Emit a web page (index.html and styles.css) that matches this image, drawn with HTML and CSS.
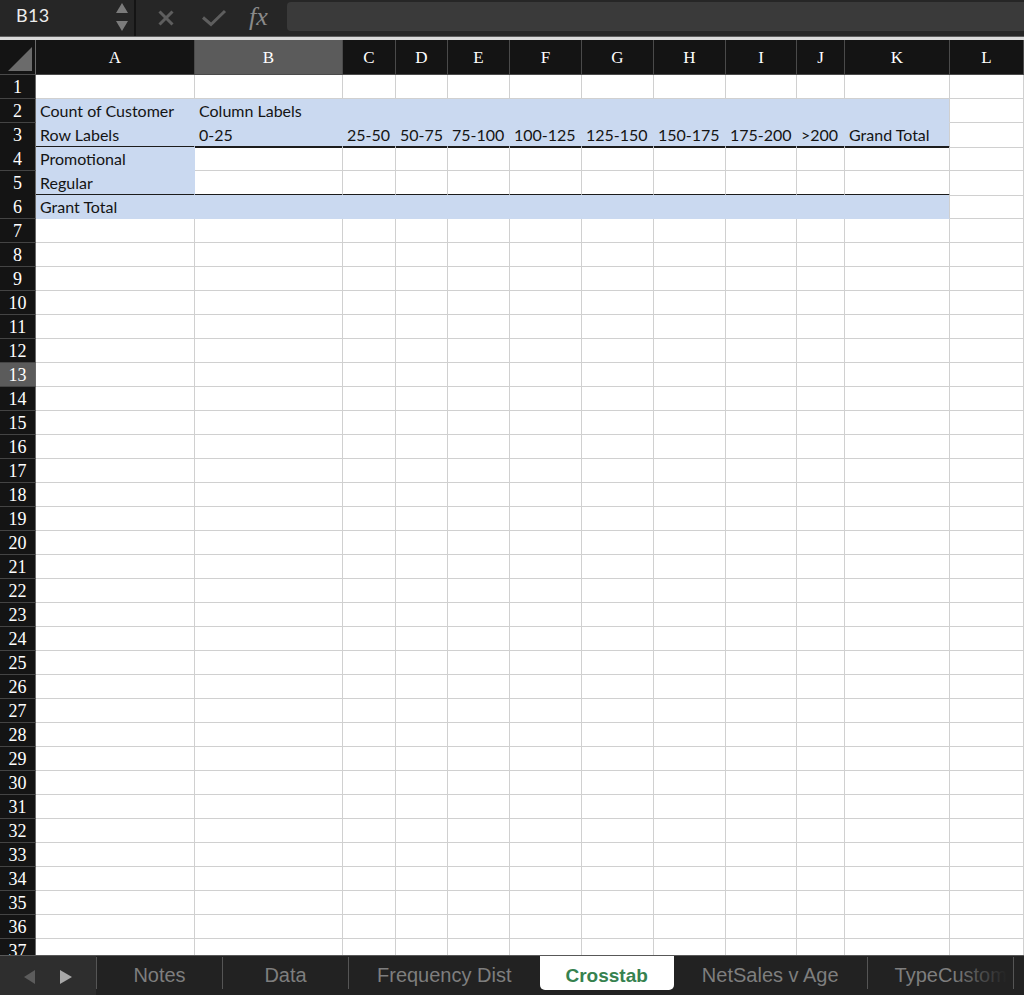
FILE: index.html
```html
<!DOCTYPE html>
<html>
<head>
<meta charset="utf-8">
<link rel="stylesheet" href="styles.css">
</head>
<body>
<div class="app">
  <div class="topbar">
    <div class="namebox">
      <span class="name">B13</span>
      <svg class="stepper" width="12" height="28" viewBox="0 0 12 28"><polygon points="0,10 6,0 12,10" /><polygon points="0,18 12,18 6,28" /></svg>
    </div>
    <div class="actions">
      <svg class="cancel" width="16" height="16" viewBox="0 0 16 16"><line x1="1.5" y1="1.5" x2="14.5" y2="14.5"/><line x1="14.5" y1="1.5" x2="1.5" y2="14.5"/></svg>
      <svg class="confirm" width="26" height="18" viewBox="0 0 26 18"><polyline points="2,8.5 10,15.5 24,2"/></svg>
      <span class="fx">fx</span>
    </div>
    <div class="formula"></div>
  </div>
  <div class="split"></div>
  <div class="sheet">
    <div class="row hdr">
      <div class="corner"><svg width="35" height="34" viewBox="0 0 35 34"><polygon points="8,31 32,31 32,7"/></svg></div>
      <div class="ch">A</div><div class="ch sel">B</div><div class="ch">C</div><div class="ch">D</div><div class="ch">E</div><div class="ch">F</div><div class="ch">G</div><div class="ch">H</div><div class="ch">I</div><div class="ch">J</div><div class="ch">K</div><div class="ch">L</div>
    </div>
    <div class="row"><div class="rh">1</div><div class="c"></div><div class="c"></div><div class="c"></div><div class="c"></div><div class="c"></div><div class="c"></div><div class="c"></div><div class="c"></div><div class="c"></div><div class="c"></div><div class="c"></div><div class="c"></div></div>
    <div class="row"><div class="rh">2</div><div class="c p">Count of Customer</div><div class="c p">Column Labels</div><div class="c p"></div><div class="c p"></div><div class="c p"></div><div class="c p"></div><div class="c p"></div><div class="c p"></div><div class="c p"></div><div class="c p"></div><div class="c p pe"></div><div class="c"></div></div>
    <div class="row"><div class="rh">3</div><div class="c p bb">Row Labels</div><div class="c p bb">0-25</div><div class="c p bb">25-50</div><div class="c p bb">50-75</div><div class="c p bb">75-100</div><div class="c p bb">100-125</div><div class="c p bb">125-150</div><div class="c p bb">150-175</div><div class="c p bb">175-200</div><div class="c p bb">&gt;200</div><div class="c p pe bb">Grand Total</div><div class="c"></div></div>
    <div class="row"><div class="rh">4</div><div class="c p">Promotional</div><div class="c"></div><div class="c"></div><div class="c"></div><div class="c"></div><div class="c"></div><div class="c"></div><div class="c"></div><div class="c"></div><div class="c"></div><div class="c"></div><div class="c"></div></div>
    <div class="row"><div class="rh">5</div><div class="c p bb">Regular</div><div class="c bb"></div><div class="c bb"></div><div class="c bb"></div><div class="c bb"></div><div class="c bb"></div><div class="c bb"></div><div class="c bb"></div><div class="c bb"></div><div class="c bb"></div><div class="c bb"></div><div class="c"></div></div>
    <div class="row"><div class="rh">6</div><div class="c p">Grant Total</div><div class="c p"></div><div class="c p"></div><div class="c p"></div><div class="c p"></div><div class="c p"></div><div class="c p"></div><div class="c p"></div><div class="c p"></div><div class="c p"></div><div class="c p pe"></div><div class="c"></div></div>
    <div class="row"><div class="rh">7</div><div class="c"></div><div class="c"></div><div class="c"></div><div class="c"></div><div class="c"></div><div class="c"></div><div class="c"></div><div class="c"></div><div class="c"></div><div class="c"></div><div class="c"></div><div class="c"></div></div>
    <div class="row"><div class="rh">8</div><div class="c"></div><div class="c"></div><div class="c"></div><div class="c"></div><div class="c"></div><div class="c"></div><div class="c"></div><div class="c"></div><div class="c"></div><div class="c"></div><div class="c"></div><div class="c"></div></div>
    <div class="row"><div class="rh">9</div><div class="c"></div><div class="c"></div><div class="c"></div><div class="c"></div><div class="c"></div><div class="c"></div><div class="c"></div><div class="c"></div><div class="c"></div><div class="c"></div><div class="c"></div><div class="c"></div></div>
    <div class="row"><div class="rh">10</div><div class="c"></div><div class="c"></div><div class="c"></div><div class="c"></div><div class="c"></div><div class="c"></div><div class="c"></div><div class="c"></div><div class="c"></div><div class="c"></div><div class="c"></div><div class="c"></div></div>
    <div class="row"><div class="rh">11</div><div class="c"></div><div class="c"></div><div class="c"></div><div class="c"></div><div class="c"></div><div class="c"></div><div class="c"></div><div class="c"></div><div class="c"></div><div class="c"></div><div class="c"></div><div class="c"></div></div>
    <div class="row"><div class="rh">12</div><div class="c"></div><div class="c"></div><div class="c"></div><div class="c"></div><div class="c"></div><div class="c"></div><div class="c"></div><div class="c"></div><div class="c"></div><div class="c"></div><div class="c"></div><div class="c"></div></div>
    <div class="row"><div class="rh sel">13</div><div class="c"></div><div class="c"></div><div class="c"></div><div class="c"></div><div class="c"></div><div class="c"></div><div class="c"></div><div class="c"></div><div class="c"></div><div class="c"></div><div class="c"></div><div class="c"></div></div>
    <div class="row"><div class="rh">14</div><div class="c"></div><div class="c"></div><div class="c"></div><div class="c"></div><div class="c"></div><div class="c"></div><div class="c"></div><div class="c"></div><div class="c"></div><div class="c"></div><div class="c"></div><div class="c"></div></div>
    <div class="row"><div class="rh">15</div><div class="c"></div><div class="c"></div><div class="c"></div><div class="c"></div><div class="c"></div><div class="c"></div><div class="c"></div><div class="c"></div><div class="c"></div><div class="c"></div><div class="c"></div><div class="c"></div></div>
    <div class="row"><div class="rh">16</div><div class="c"></div><div class="c"></div><div class="c"></div><div class="c"></div><div class="c"></div><div class="c"></div><div class="c"></div><div class="c"></div><div class="c"></div><div class="c"></div><div class="c"></div><div class="c"></div></div>
    <div class="row"><div class="rh">17</div><div class="c"></div><div class="c"></div><div class="c"></div><div class="c"></div><div class="c"></div><div class="c"></div><div class="c"></div><div class="c"></div><div class="c"></div><div class="c"></div><div class="c"></div><div class="c"></div></div>
    <div class="row"><div class="rh">18</div><div class="c"></div><div class="c"></div><div class="c"></div><div class="c"></div><div class="c"></div><div class="c"></div><div class="c"></div><div class="c"></div><div class="c"></div><div class="c"></div><div class="c"></div><div class="c"></div></div>
    <div class="row"><div class="rh">19</div><div class="c"></div><div class="c"></div><div class="c"></div><div class="c"></div><div class="c"></div><div class="c"></div><div class="c"></div><div class="c"></div><div class="c"></div><div class="c"></div><div class="c"></div><div class="c"></div></div>
    <div class="row"><div class="rh">20</div><div class="c"></div><div class="c"></div><div class="c"></div><div class="c"></div><div class="c"></div><div class="c"></div><div class="c"></div><div class="c"></div><div class="c"></div><div class="c"></div><div class="c"></div><div class="c"></div></div>
    <div class="row"><div class="rh">21</div><div class="c"></div><div class="c"></div><div class="c"></div><div class="c"></div><div class="c"></div><div class="c"></div><div class="c"></div><div class="c"></div><div class="c"></div><div class="c"></div><div class="c"></div><div class="c"></div></div>
    <div class="row"><div class="rh">22</div><div class="c"></div><div class="c"></div><div class="c"></div><div class="c"></div><div class="c"></div><div class="c"></div><div class="c"></div><div class="c"></div><div class="c"></div><div class="c"></div><div class="c"></div><div class="c"></div></div>
    <div class="row"><div class="rh">23</div><div class="c"></div><div class="c"></div><div class="c"></div><div class="c"></div><div class="c"></div><div class="c"></div><div class="c"></div><div class="c"></div><div class="c"></div><div class="c"></div><div class="c"></div><div class="c"></div></div>
    <div class="row"><div class="rh">24</div><div class="c"></div><div class="c"></div><div class="c"></div><div class="c"></div><div class="c"></div><div class="c"></div><div class="c"></div><div class="c"></div><div class="c"></div><div class="c"></div><div class="c"></div><div class="c"></div></div>
    <div class="row"><div class="rh">25</div><div class="c"></div><div class="c"></div><div class="c"></div><div class="c"></div><div class="c"></div><div class="c"></div><div class="c"></div><div class="c"></div><div class="c"></div><div class="c"></div><div class="c"></div><div class="c"></div></div>
    <div class="row"><div class="rh">26</div><div class="c"></div><div class="c"></div><div class="c"></div><div class="c"></div><div class="c"></div><div class="c"></div><div class="c"></div><div class="c"></div><div class="c"></div><div class="c"></div><div class="c"></div><div class="c"></div></div>
    <div class="row"><div class="rh">27</div><div class="c"></div><div class="c"></div><div class="c"></div><div class="c"></div><div class="c"></div><div class="c"></div><div class="c"></div><div class="c"></div><div class="c"></div><div class="c"></div><div class="c"></div><div class="c"></div></div>
    <div class="row"><div class="rh">28</div><div class="c"></div><div class="c"></div><div class="c"></div><div class="c"></div><div class="c"></div><div class="c"></div><div class="c"></div><div class="c"></div><div class="c"></div><div class="c"></div><div class="c"></div><div class="c"></div></div>
    <div class="row"><div class="rh">29</div><div class="c"></div><div class="c"></div><div class="c"></div><div class="c"></div><div class="c"></div><div class="c"></div><div class="c"></div><div class="c"></div><div class="c"></div><div class="c"></div><div class="c"></div><div class="c"></div></div>
    <div class="row"><div class="rh">30</div><div class="c"></div><div class="c"></div><div class="c"></div><div class="c"></div><div class="c"></div><div class="c"></div><div class="c"></div><div class="c"></div><div class="c"></div><div class="c"></div><div class="c"></div><div class="c"></div></div>
    <div class="row"><div class="rh">31</div><div class="c"></div><div class="c"></div><div class="c"></div><div class="c"></div><div class="c"></div><div class="c"></div><div class="c"></div><div class="c"></div><div class="c"></div><div class="c"></div><div class="c"></div><div class="c"></div></div>
    <div class="row"><div class="rh">32</div><div class="c"></div><div class="c"></div><div class="c"></div><div class="c"></div><div class="c"></div><div class="c"></div><div class="c"></div><div class="c"></div><div class="c"></div><div class="c"></div><div class="c"></div><div class="c"></div></div>
    <div class="row"><div class="rh">33</div><div class="c"></div><div class="c"></div><div class="c"></div><div class="c"></div><div class="c"></div><div class="c"></div><div class="c"></div><div class="c"></div><div class="c"></div><div class="c"></div><div class="c"></div><div class="c"></div></div>
    <div class="row"><div class="rh">34</div><div class="c"></div><div class="c"></div><div class="c"></div><div class="c"></div><div class="c"></div><div class="c"></div><div class="c"></div><div class="c"></div><div class="c"></div><div class="c"></div><div class="c"></div><div class="c"></div></div>
    <div class="row"><div class="rh">35</div><div class="c"></div><div class="c"></div><div class="c"></div><div class="c"></div><div class="c"></div><div class="c"></div><div class="c"></div><div class="c"></div><div class="c"></div><div class="c"></div><div class="c"></div><div class="c"></div></div>
    <div class="row"><div class="rh">36</div><div class="c"></div><div class="c"></div><div class="c"></div><div class="c"></div><div class="c"></div><div class="c"></div><div class="c"></div><div class="c"></div><div class="c"></div><div class="c"></div><div class="c"></div><div class="c"></div></div>
    <div class="row"><div class="rh">37</div><div class="c"></div><div class="c"></div><div class="c"></div><div class="c"></div><div class="c"></div><div class="c"></div><div class="c"></div><div class="c"></div><div class="c"></div><div class="c"></div><div class="c"></div><div class="c"></div></div>
  </div>
  <div class="tabbar">
    <div class="nav">
      <svg width="12" height="14" viewBox="0 0 12 14"><polygon class="prev" points="11,0 11,14 0,7"/></svg>
      <svg width="12" height="14" viewBox="0 0 12 14"><polygon class="next" points="0,0 0,14 12,7"/></svg>
    </div>
    <div class="tab">Notes</div>
    <div class="tab">Data</div>
    <div class="tab">Frequency Dist</div>
    <div class="tab active">Crosstab</div>
    <div class="tab noline">NetSales v Age</div>
    <div class="tab last">TypeCustomer<span class="fade"></span></div>
  </div>
</div>
</body>
</html>
```
FILE: styles.css
```css
* { box-sizing: border-box; }
html, body { margin: 0; padding: 0; }
body {
  width: 1024px;
  height: 995px;
  overflow: hidden;
  background: #ffffff;
  font-family: Lato, "Liberation Sans", sans-serif;
}
.app { display: flex; flex-direction: column; height: 995px; }

/* top formula bar */
.topbar { height: 36px; background: #262626; display: flex; flex: none; }
.namebox {
  width: 136px;
  border-right: 2px solid #141414;
  display: flex;
  align-items: center;
  justify-content: space-between;
  padding: 0 6px 0 16px;
}
.name { color: #ececec; font-size: 18px; line-height: 22px; padding-bottom: 7px; letter-spacing: 0.3px; }
.stepper { fill: #7b7b7b; margin-top: -3px; }
.actions { width: 151px; display: flex; align-items: center; }
.cancel { margin-left: 22px; stroke: #5e5e5e; stroke-width: 3; flex: none; }
.confirm { margin-left: 27px; margin-top: -1px; stroke: #5e5e5e; stroke-width: 3; fill: none; flex: none; }
.fx {
  margin-left: 22px;
  font-family: "Liberation Serif", serif;
  font-style: italic;
  font-size: 26px;
  line-height: 30px;
  color: #8a8a8a;
  padding-bottom: 3px;
}
.formula { flex: 1; margin: 2px 0 5px 0; background: #3a3a3a; border-radius: 4px 0 0 4px; }
.split { height: 4px; flex: none; border-top: 1px solid #5e5e5e; background: #dadada; }

/* sheet grid */
.sheet { flex: 1; overflow: hidden; background: #fff; }
.row {
  display: grid;
  grid-template-columns: 36px 159px 148px 53px 52px 62px 72px 72px 72px 71px 48px 105px 1fr;
  height: 24px;
}
.row.hdr { height: 35px; }
.corner { background: #141414; border-right: 1px solid #6a6a6a; border-bottom: 1px solid #4a4a4a; }
.corner svg { display: block; fill: #6b6b6b; }
.ch {
  background: #141414;
  color: #ffffff;
  font-family: "Liberation Serif", serif;
  font-size: 17px;
  line-height: 32px;
  padding-top: 2px;
  text-align: center;
  border-right: 1px solid #4a4a4a;
  border-bottom: 1px solid #4a4a4a;
}
.ch.sel { background: #5b5b5b; }
.rh {
  background: #141414;
  color: #ffffff;
  font-family: "Liberation Serif", serif;
  font-size: 18px;
  line-height: 22px;
  padding-top: 1px;
  text-align: center;
  border-right: 1px solid #6a6a6a;
  border-bottom: 1px solid #444444;
}
.rh.sel { background: #5b5b5b; }
.c {
  border-right: 1px solid #d0d0d0;
  border-bottom: 1px solid #d0d0d0;
  padding-left: 4px;
  font-size: 16px;
  line-height: 23px;
  color: #141414;
  white-space: nowrap;
}
.c.p { background: #cad9f0; border-right-color: #cad9f0; border-bottom-color: #cad9f0; }
.c.p.pe { border-right-color: #d0d0d0; }
.c.bb, .c.p.bb { border-bottom: 2px solid #1c1c1c; }

/* sheet tabs */
.tabbar {
  height: 40px;
  flex: none;
  background: #222222;
  border-top: 1px solid #585858;
  display: flex;
  align-items: flex-start;
  overflow: hidden;
}
.nav {
  width: 96px;
  height: 39px;
  background: #2e2e2e;
  display: flex;
  align-items: center;
  gap: 24px;
  padding: 2px 0 0 24px;
  flex: none;
}
.nav .prev { fill: #5c5c5c; }
.nav .next { fill: #a8a8a8; }
.tab {
  height: 32px;
  margin-top: 1px;
  min-width: 126px;
  padding: 5px 28px 0 28px;
  border-left: 1px solid #555555;
  font-family: "Liberation Sans", Arial, sans-serif;
  font-size: 20px;
  line-height: 27px;
  color: #7e7e7e;
  text-align: center;
  white-space: nowrap;
  flex: none;
}
.tab.active {
  height: 34px;
  margin-top: 0;
  min-width: 0;
  padding: 6px 26px 0 26px;
  border-left: none;
  background: #ffffff;
  border-radius: 0 0 5px 5px;
  color: #36824f;
  font-weight: bold;
  font-size: 19px;
}
.tab.noline { border-left: none; }
.tab.last {
  width: 147px;
  min-width: 0;
  padding-left: 27px;
  padding-right: 0;
  text-align: left;
  overflow: hidden;
  position: relative;
  border-right: 1px solid #555555;
}
.fade {
  position: absolute;
  top: 0;
  right: 0;
  width: 60px;
  height: 100%;
  background: linear-gradient(to right, rgba(34, 34, 34, 0), #222222 90%);
}
```
